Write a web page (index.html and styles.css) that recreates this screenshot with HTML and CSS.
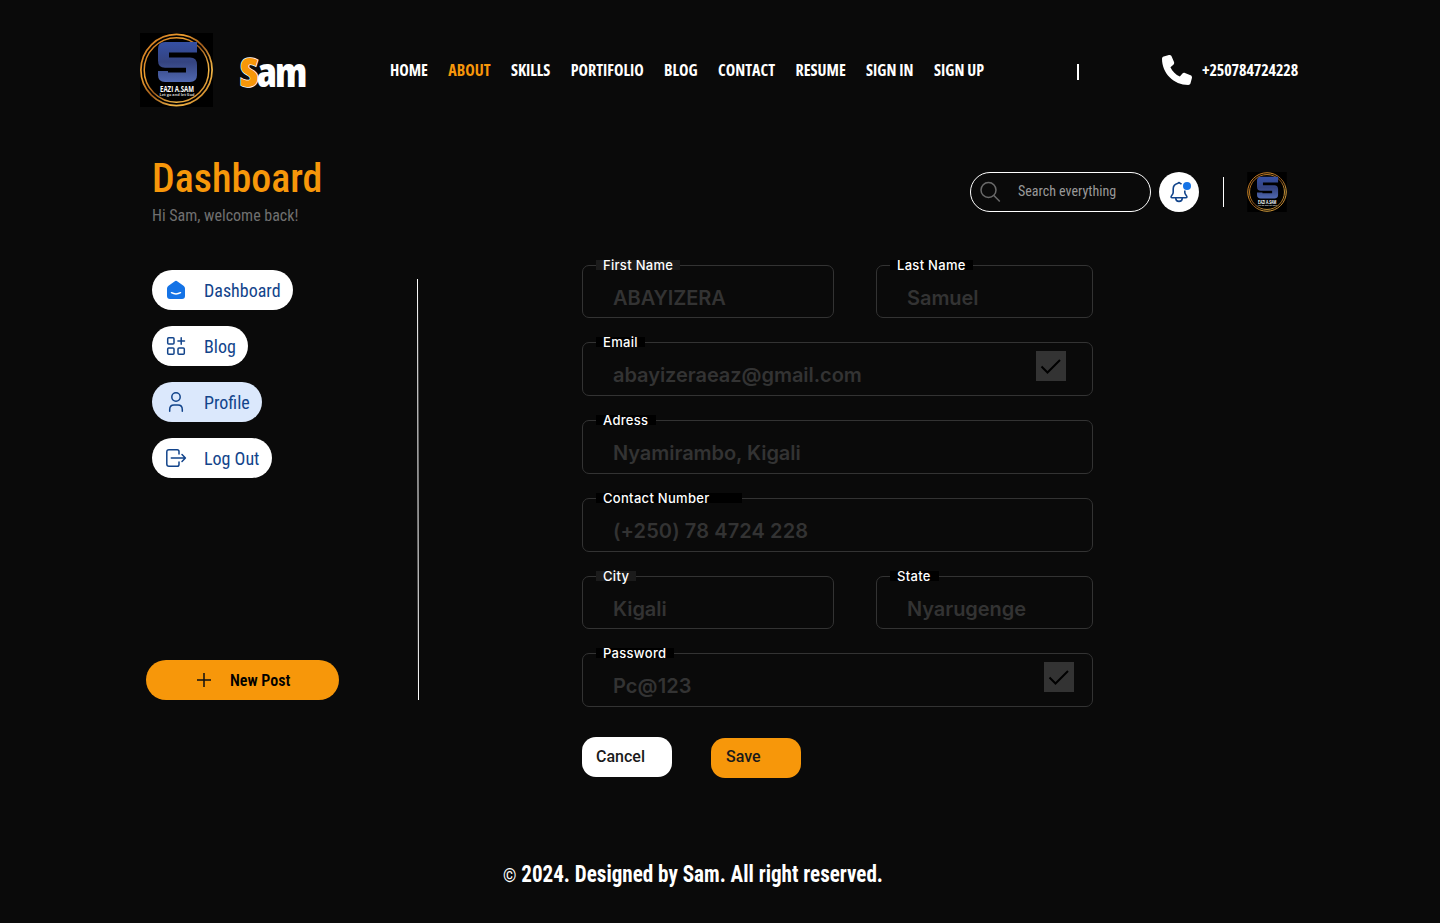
FILE: index.html
```html
<!DOCTYPE html>
<html lang="en">
<head>
<meta charset="utf-8">
<title>Dashboard - Profile</title>
<link rel="stylesheet" href="styles.css">
</head>
<body>
<svg class="defs" width="0" height="0">
  <defs>
    <linearGradient id="ring" x1="0" y1="0" x2="1" y2="1">
      <stop offset="0" stop-color="#b8641a"/><stop offset=".3" stop-color="#f0a030"/><stop offset=".5" stop-color="#a05c1c"/><stop offset=".75" stop-color="#f4b848"/><stop offset="1" stop-color="#ac6014"/>
    </linearGradient>
    <linearGradient id="steel" x1="0" y1="0" x2="0" y2="1">
      <stop offset="0" stop-color="#3550a4"/><stop offset=".5" stop-color="#34437f"/><stop offset="1" stop-color="#5068b0"/>
    </linearGradient>
    <symbol id="logo" viewBox="0 0 73 74">
      <rect width="73" height="74" fill="#000"/>
      <circle cx="36.500" cy="37" r="35.600" fill="none" stroke="url(#ring)" stroke-width="1.700"/>
      <circle cx="36.500" cy="37" r="32.300" fill="none" stroke="url(#ring)" stroke-width="1.500"/>
      <path d="M57 9V19.500H29V24.600H50Q57 24.600 57 32V42Q57 49 50 49H25Q18 49 18 42V38H28V39.500H46V34.700H25Q18 34.700 18 27.500V16Q18 9 25 9Z" fill="url(#steel)"/>
      <text class="logo-name" x="37" y="59" text-anchor="middle" textLength="34" lengthAdjust="spacingAndGlyphs">EAZI A.SAM</text>
      <text class="logo-motto" x="37" y="63" text-anchor="middle" textLength="35" lengthAdjust="spacingAndGlyphs">Let go and let God</text>
    </symbol>
  </defs>
</svg>

<header class="top">
  <svg class="logo"><use href="#logo"/></svg>
  <div class="brand"><span class="brand-s">S</span>am</div>
  <nav class="nav">
    <a>HOME</a><a class="on">ABOUT</a><a>SKILLS</a><a>PORTIFOLIO</a><a>BLOG</a><a>CONTACT</a><a>RESUME</a><a>SIGN IN</a><a>SIGN UP</a>
  </nav>
  <span class="bar"></span>
  <svg class="phone" viewBox="0 0 512 512"><path fill="#fff" d="M164.900 24.600c-7.700-18.600-28-28.500-47.400-23.200l-88 24C12.100 30.200 0 46 0 64c0 247.400 200.600 448 448 448 18 0 33.800-12.100 38.600-29.500l24-88c5.300-19.400-4.600-39.700-23.200-47.400l-96-40c-16.300-6.800-35.200-2.100-46.300 11.600L304.700 368C234.300 334.700 177.300 277.700 144 207.300L193.300 167c13.700-11.200 18.400-30 11.600-46.300z"/></svg>
  <span class="tel">+250784724228</span>
</header>

<section class="head">
  <div class="titles">
    <h1>Dashboard</h1>
    <p>Hi Sam, welcome back!</p>
  </div>
  <div class="search">
    <svg width="22" height="22" viewBox="0 0 22 22" fill="none" stroke="#6a6a6a" stroke-width="1.500"><circle cx="8.500" cy="9" r="7.500"/><path d="M13.900 14.400L19.800 20.600"/></svg>
    <span>Search everything</span>
  </div>
  <div class="bell">
    <svg width="40" height="40" viewBox="0 0 40 40" fill="none" stroke="#12448b" stroke-width="1.600" stroke-linejoin="round"><path d="M22.500 12.300Q21.800 11.500 21 11.300Q20 10 19 11.300C16 12 14.200 14.200 14.200 17V20.300Q14.200 21.800 12.900 23.200Q10.900 25.700 13.500 25.700H26.500Q29.100 25.700 27.100 23.200Q25.800 21.800 25.800 20.300V18.500"/><path d="M16.800 25.700V26.500A3.200 2.900 0 0 0 23.200 26.500V25.700"/><circle cx="28" cy="14" r="4" fill="#1473e6" stroke="none"/></svg>
  </div>
  <span class="sep"></span>
  <svg class="avatar"><use href="#logo"/></svg>
</section>

<main class="main">
  <aside class="side">
    <a class="pill p1"><svg viewBox="0 0 24 24"><path d="M10.500 3.400Q12 2.300 13.500 3.400L19.500 7.700Q21 8.800 21 10.500V18Q21 21 18 21H6Q3 21 3 18V10.500Q3 8.800 4.500 7.700Z" fill="#1473e6"/><path d="M7.500 14.700Q12 17.200 16.500 14.700" fill="none" stroke="#fff" stroke-width="1.500" stroke-linecap="round"/></svg><span>Dashboard</span></a>
    <a class="pill p2"><svg viewBox="0 0 24 24" class="line"><rect x="3.700" y="3.700" width="6.300" height="6.300" rx="1"/><rect x="3.700" y="14" width="6.300" height="6.300" rx="1"/><rect x="14" y="14" width="6.300" height="6.300" rx="1"/><path d="M17.200 3.700V10.300M13.900 7H20.500"/></svg><span>Blog</span></a>
    <a class="pill p3"><svg viewBox="0 0 24 24" class="line"><circle cx="12" cy="7" r="4.200"/><path d="M5.700 21.300V19.500Q5.700 15 10 15H14Q18.300 15 18.300 19.500V21.300"/></svg><span>Profile</span></a>
    <a class="pill p4"><svg viewBox="0 0 24 24" class="line"><path d="M15 8V5.500Q15 3.700 13.200 3.700H5Q2.800 3.700 2.800 6V18Q2.800 20.300 5 20.300H13.200Q15 20.300 15 18.500V16M7.300 12H21M18 8.500L21.400 12L18 15.500"/></svg><span>Log Out</span></a>
    <a class="post"><svg width="14" height="14" viewBox="0 0 14 14" stroke="#111" stroke-width="1.500"><path d="M7 0V14M0 7H14"/></svg>New Post</a>
  </aside>
  <svg class="rule" viewBox="0 0 4 421"><path d="M1.500 0L2.500 421" stroke="#fff" stroke-width="1"/></svg>

  <form class="form">
    <div class="row short">
      <div class="field a"><label class="gray w84">First Name</label><b>ABAYIZERA</b></div>
      <div class="field b"><label class="w83">Last Name</label><b>Samuel</b></div>
    </div>
    <div class="row"><div class="field"><label class="w49">Email</label><b>abayizeraeaz@gmail.com</b>
      <svg class="check mail" viewBox="0 0 30 30"><path d="M5.500 15.500L11.500 21.500L24 9" fill="none" stroke="#000" stroke-width="2"/></svg></div></div>
    <div class="row"><div class="field"><label class="w60">Adress</label><b>Nyamirambo, Kigali</b></div></div>
    <div class="row"><div class="field"><label class="w146">Contact Number</label><b class="num">(+250) 78 4724 228</b></div></div>
    <div class="row short">
      <div class="field a"><label class="gray w40">City</label><b>Kigali</b></div>
      <div class="field b"><label class="w49">State</label><b>Nyarugenge</b></div>
    </div>
    <div class="row"><div class="field"><label class="w78">Password</label><b class="num">Pc@123</b>
      <svg class="check" viewBox="0 0 30 30"><path d="M5.500 15.500L11.500 21.500L24 9" fill="none" stroke="#000" stroke-width="2"/></svg></div></div>
    <div class="actions"><button type="button" class="cancel">Cancel</button><button type="button" class="save">Save</button></div>
  </form>
</main>

<footer class="foot"><svg width="440" height="44"><text x="0" y="26" textLength="380" lengthAdjust="spacingAndGlyphs"><tspan class="copy">©</tspan> 2024. Designed by Sam. All right reserved.</text></svg></footer>
</body>
</html>
```

FILE: styles.css
```css
* { box-sizing: border-box; }
body { margin: 0; width: 1440px; height: 923px; overflow: hidden; background: #0a0a0a; color: #fff; font-family: Roboto, sans-serif; white-space: nowrap; }
svg { display: block; flex: none; }
.defs { position: absolute; }

.top { display: flex; align-items: center; height: 140px; padding-left: 140px; font-family: "Open Sans", sans-serif; font-stretch: 75%; font-weight: 700; font-size: 16px; }
.logo { width: 73px; height: 74px; }
.logo-name { font: 700 9.500px "Open Sans", sans-serif; fill: #fff; }
.logo-motto { font: 700 3.500px "Open Sans", sans-serif; fill: #ccc; }
.brand { width: 177px; padding-left: 27px; font-size: 41px; font-weight: 800; line-height: 50px; padding-top: 1px; letter-spacing: -1.900px; }
.brand-s { color: #f7970a; -webkit-text-stroke: 1.500px #fff; paint-order: stroke fill; }
.nav { display: flex; gap: 20.400px; width: 687px; }
.nav .on { color: #f7970a; }
.bar { width: 1.500px; height: 16px; background: #fff; margin-top: 3px; }
.phone { width: 30px; height: 32px; margin-left: 83.500px; }
.tel { margin-left: 10px; letter-spacing: -.12px; }

.head { display: flex; height: 114px; padding-left: 152px; font-stretch: 75%; }
.titles { width: 818px; padding-top: 15px; }
h1 { margin: 0; font-size: 40px; line-height: 48px; font-weight: 500; color: #f7970a; }
p { margin: 2px 0 0; font-size: 16px; line-height: 22px; color: #707070; }
.search { display: flex; align-items: center; width: 181px; height: 40px; margin-top: 32px; padding-left: 9px; border: 1px solid #fff; border-radius: 20px; color: #999; font-size: 14px; }
.search span { margin: -2px 0 0 16px; }
.bell { width: 40px; height: 40px; margin: 32px 24px 0 8px; border-radius: 50%; background: #fff; }
.sep { width: 1px; height: 30px; margin-top: 37px; background: #fff; }
.avatar { width: 40px; height: 40px; margin: 32px 0 0 23px; }

.main { display: flex; height: 546px; padding-left: 146px; }
.side { display: flex; flex-direction: column; align-items: flex-start; gap: 16px; width: 270px; padding-top: 16px; font-stretch: 75%; }
.pill { display: flex; align-items: center; gap: 16px; height: 40px; margin-left: 6px; padding-left: 12px; border-radius: 20px; background: #fff; color: #12448b; font-size: 18px; }
.pill svg { width: 24px; height: 24px; }
.line { fill: none; stroke: #12448b; stroke-width: 1.500; stroke-linejoin: round; stroke-linecap: round; }
.p1 { width: 141px; }
.p2 { width: 96px; }
.p3 { width: 110px; background: #dbe8fc; }
.p4 { width: 120px; }
.post { display: flex; align-items: center; gap: 19px; width: 193px; height: 40px; margin-top: 166px; padding-left: 51px; border-radius: 20px; background: #f7970a; color: #000; font-size: 16px; font-weight: 600; }
.rule { width: 4px; height: 421px; margin-top: 25px; }

.form { display: flex; flex-direction: column; gap: 24px; width: 511px; margin: 11px 0 0 162px; font-family: Inter, sans-serif; }
.row { display: flex; justify-content: space-between; height: 54px; flex: none; }
.short { height: 53px; }
.field { display: flex; flex-direction: column; position: relative; flex: 1; padding-left: 13px; border: 1px solid #333; border-radius: 7px; }
.a { flex: 0 0 252px; }
.b { flex: 0 0 217px; }
.field label { height: 10px; margin-top: -6px; padding-left: 7px; line-height: 10px; background: #000; font-size: 13px; font-weight: 500; letter-spacing: .3px; }
.field .gray { background: #1b1b1b; }
.w84 { width: 84px; } .w83 { width: 83px; } .w49 { width: 49px; } .w60 { width: 60px; } .w146 { width: 146px; } .w40 { width: 40px; } .w78 { width: 78px; }
.field b { margin: 16px 0 0 17px; font-size: 20px; line-height: 24px; font-weight: 600; color: #333; letter-spacing: -.05px; }
.field .num { letter-spacing: .1px; }
.check { position: absolute; top: 8px; right: 18px; width: 30px; height: 30px; background: #333; }
.mail { right: 26px; }
.actions { display: flex; gap: 39px; margin-top: 6px; }
.actions button { width: 90px; height: 40px; padding: 0 0 1px 14px; border: 0; border-radius: 14px; background: #fff; color: #1a1a1a; text-align: left; font: 500 16px Roboto, sans-serif; }
.actions .save { margin-top: 1px; padding: 0 0 3px 15px; background: #f7970a; }

.foot { padding: 56px 0 0 503px; }
.foot svg { overflow: visible; }
.foot text { font-family: Roboto, sans-serif; font-stretch: 75%; font-weight: 700; font-size: 23.500px; fill: #fff; }
.foot .copy { font-size: 19px; font-weight: 400; }
```
